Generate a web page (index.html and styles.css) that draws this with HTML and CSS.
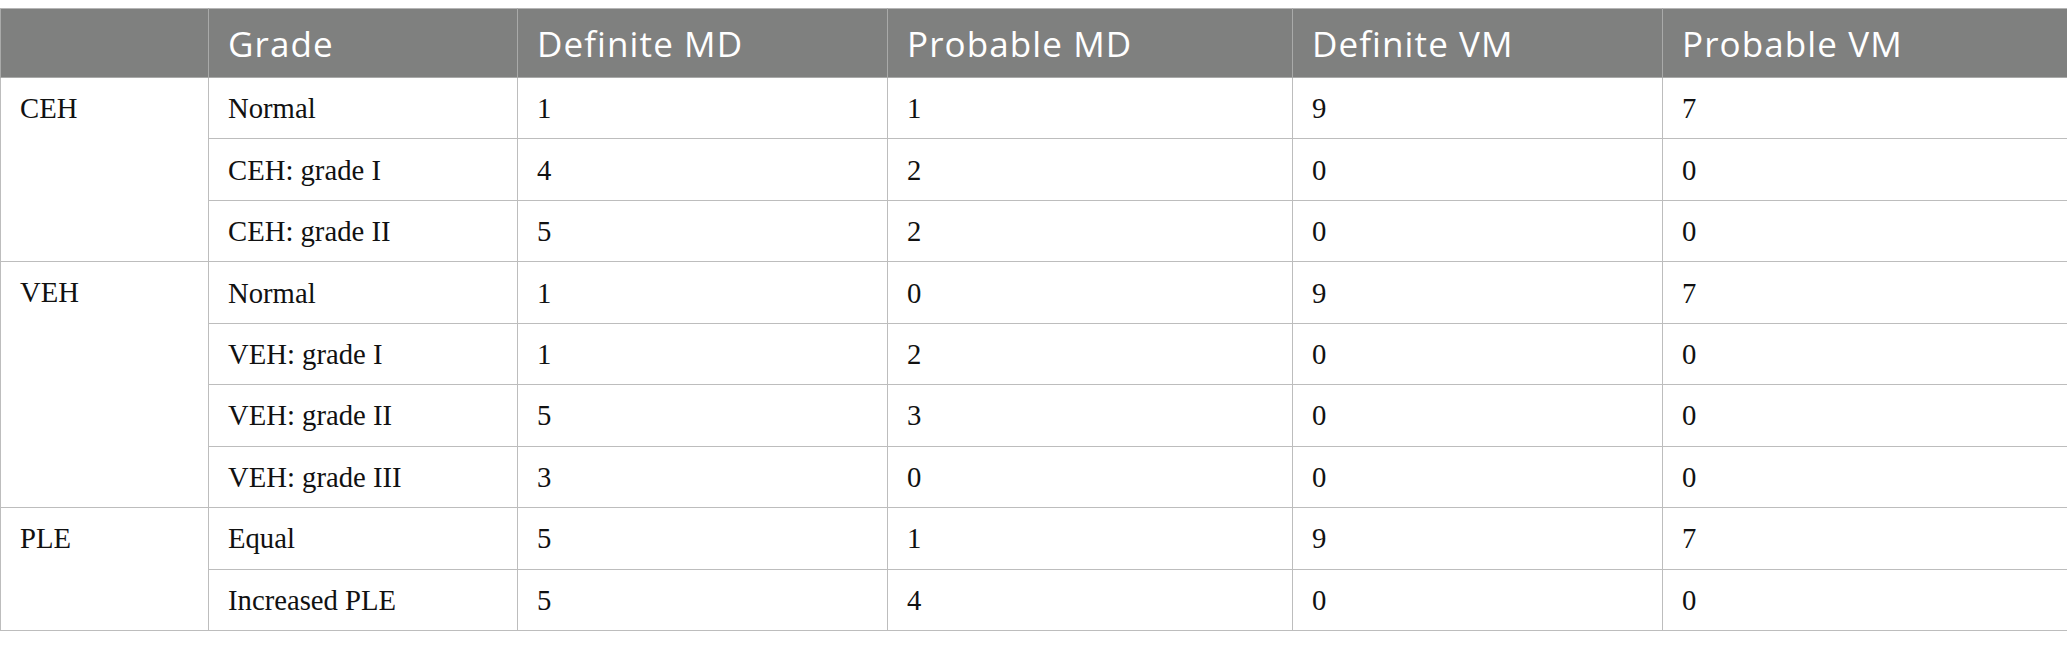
FILE: index.html
```html
<!DOCTYPE html>
<html>
<head>
<meta charset="utf-8">
<link rel="stylesheet" href="styles.css">
</head>
<body>
<table class="data">
  <colgroup>
    <col class="c1"><col class="c2"><col class="c3"><col class="c4"><col class="c5"><col class="c6">
  </colgroup>
  <thead>
    <tr><th></th><th>Grade</th><th>Definite MD</th><th>Probable MD</th><th>Definite VM</th><th>Probable VM</th></tr>
  </thead>
  <tbody>
    <tr><td class="grp" rowspan="3">CEH</td><td>Normal</td><td>1</td><td>1</td><td>9</td><td>7</td></tr>
    <tr><td>CEH: grade I</td><td>4</td><td>2</td><td>0</td><td>0</td></tr>
    <tr><td>CEH: grade II</td><td>5</td><td>2</td><td>0</td><td>0</td></tr>
    <tr><td class="grp" rowspan="4">VEH</td><td>Normal</td><td>1</td><td>0</td><td>9</td><td>7</td></tr>
    <tr><td>VEH: grade I</td><td>1</td><td>2</td><td>0</td><td>0</td></tr>
    <tr><td>VEH: grade II</td><td>5</td><td>3</td><td>0</td><td>0</td></tr>
    <tr><td>VEH: grade III</td><td>3</td><td>0</td><td>0</td><td>0</td></tr>
    <tr><td class="grp" rowspan="2">PLE</td><td>Equal</td><td>5</td><td>1</td><td>9</td><td>7</td></tr>
    <tr><td>Increased PLE</td><td>5</td><td>4</td><td>0</td><td>0</td></tr>
  </tbody>
</table>
</body>
</html>
```
FILE: styles.css
```css
html, body {
  margin: 0;
  padding: 0;
  background: #ffffff;
}
body {
  padding-top: 8px;
}
.data {
  width: 2067px;
  border-collapse: collapse;
  table-layout: fixed;
}
.c1 { width: 208px; }
.c2 { width: 309px; }
.c3 { width: 370px; }
.c4 { width: 405px; }
.c5 { width: 370px; }
.c6 { width: 405px; }
.data th {
  background: #7f807f;
  color: #ffffff;
  font-family: "Open Sans", "Noto Sans", sans-serif;
  font-weight: 400;
  font-size: 35px;
  text-align: left;
  height: 68px;
  padding: 0 19px;
  border: 1px solid #a9aaa9;
  border-top-color: #b5b5b5;
  vertical-align: middle;
  letter-spacing: 1.1px;
}
.data td {
  font-family: "Liberation Serif", "Times New Roman", serif;
  font-size: 28.7px;
  color: #111111;
  height: 60.44px;
  padding: 0 19px;
  border: 1px solid #bdbdbd;
  vertical-align: middle;
  line-height: 34px;
}
.data td.grp {
  vertical-align: top;
  padding-top: 13px;
}
```
